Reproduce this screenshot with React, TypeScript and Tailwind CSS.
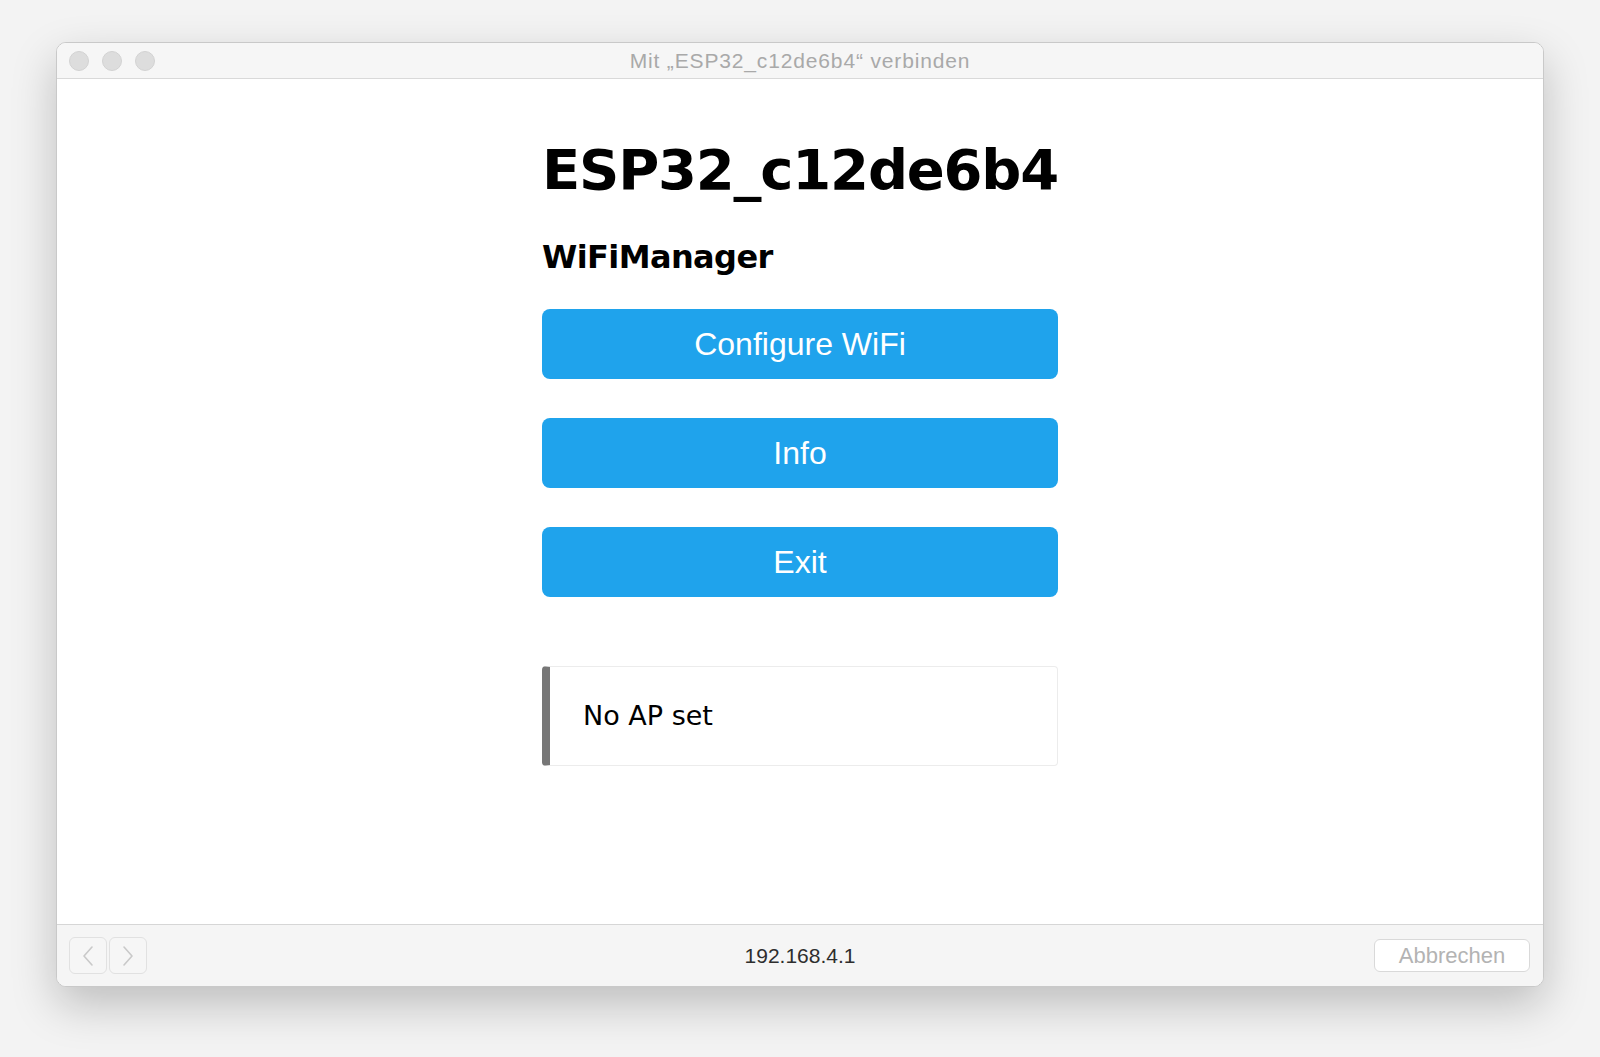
import React from 'react'

const sans = { fontFamily: '"Liberation Sans", Arial, sans-serif' }
const verdana = { fontFamily: '"DejaVu Sans", Verdana, sans-serif' }

function TrafficLight() {
  return <span className="block h-[20px] w-[20px] rounded-full border border-[#d2d2d2] bg-[#dddddd]" />
}

function MenuButton({ label }: { label: string }) {
  return (
    <button
      className="h-[70px] w-full rounded-[8px] bg-[#1fa3ec] text-[32px] leading-none text-white"
      style={sans}
    >
      {label}
    </button>
  )
}

function NavButton({ dir }: { dir: 'left' | 'right' }) {
  return (
    <div className="flex h-[37px] w-[38px] items-center justify-center rounded-[6px] border border-[#e1e1e1] bg-[#f6f6f6]">
      <svg width="14" height="22" viewBox="0 0 14 22" fill="none">
        <polyline
          points={dir === 'left' ? '11,2 3,11 11,20' : '3,2 11,11 3,20'}
          stroke="#c9c9c9"
          strokeWidth="1.6"
          strokeLinecap="round"
          strokeLinejoin="round"
        />
      </svg>
    </div>
  )
}

export default function App() {
  return (
    <div className="h-[1057px] w-[1600px] overflow-hidden bg-[#f3f3f3] pl-[56px] pt-[42px]">
      <div className="flex h-[945px] w-[1488px] flex-col overflow-hidden rounded-[10px] border border-[#c9c9c9] bg-white shadow-[0_18px_45px_rgba(0,0,0,0.22)]">
        {/* Title bar */}
        <div className="relative flex h-[36px] shrink-0 items-center border-b border-[#d9d9d9] bg-[#f6f6f6] pl-[12px]">
          <div className="flex gap-[13px]">
            <TrafficLight />
            <TrafficLight />
            <TrafficLight />
          </div>
          <div
            className="absolute inset-x-0 top-0 flex h-full items-center justify-center pt-[1px] text-[21px] tracking-[0.85px] text-[#a9a9a9]"
            style={sans}
          >
            Mit „ESP32_c12de6b4“ verbinden
          </div>
        </div>

        {/* Page */}
        <div className="flex-1 bg-white">
          <div className="mx-auto flex w-[516px] flex-col pt-[63px]" style={verdana}>
            <h1 className="text-[56px] font-bold leading-none tracking-[-1.2px] text-black">ESP32_c12de6b4</h1>
            <h3 className="mt-[43px] text-[32px] font-bold leading-none tracking-[-0.6px] text-black">WiFiManager</h3>

            <div className="mt-[36px] flex flex-col gap-[39px]">
              <MenuButton label="Configure WiFi" />
              <MenuButton label="Info" />
              <MenuButton label="Exit" />
            </div>

            <div className="mt-[69px] flex h-[100px] items-center rounded-[4px] border border-l-[8px] border-[#ececec] border-l-[#777777] pl-[33px]">
              <span className="text-[27px] text-black">No AP set</span>
            </div>
          </div>
        </div>

        {/* Footer */}
        <div className="grid h-[62px] shrink-0 grid-cols-[1fr_auto_1fr] items-center border-t border-[#d6d6d6] bg-[#f5f5f5] px-[12px]">
          <div className="flex gap-[2px]">
            <NavButton dir="left" />
            <NavButton dir="right" />
          </div>
          <div className="text-[21px] text-[#2e2e2e]" style={sans}>
            192.168.4.1
          </div>
          <div className="flex justify-end pr-[1px]">
            <button
              className="flex h-[33px] w-[156px] items-center justify-center rounded-[6px] border border-[#d9d9d9] bg-white text-[22px] text-[#b3b3b3]"
              style={sans}
            >
              Abbrechen
            </button>
          </div>
        </div>
      </div>
    </div>
  )
}
